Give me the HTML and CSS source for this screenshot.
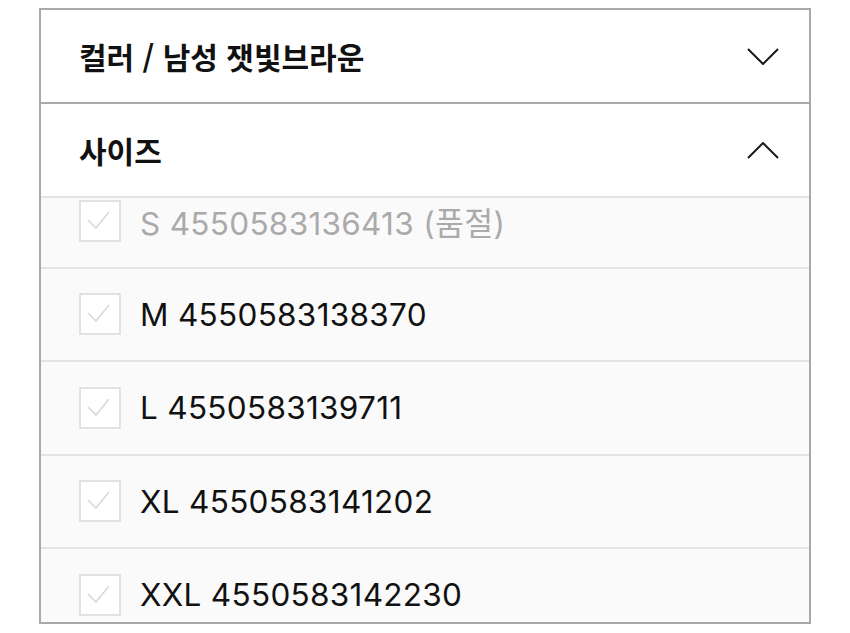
FILE: index.html
```html
<!DOCTYPE html>
<html lang="ko">
<head>
  <meta charset="UTF-8" />
  <meta name="viewport" content="width=device-width, initial-scale=1.0" />
  <title>옵션 선택</title>
  <link rel="stylesheet" href="styles.css">
</head>
<body>
  <div class="panel">
    <div class="acc-head">
      <span class="acc-title">컬러 / 남성 잿빛브라운</span>
      <svg class="chevron" width="32" height="17" viewBox="0 0 32 17">
        <polyline points="1,1 16,16 31,1" />
      </svg>
    </div>
    <div class="acc-head open">
      <span class="acc-title">사이즈</span>
      <svg class="chevron" width="32" height="17" viewBox="0 0 32 17">
        <polyline points="1,16 16,1 31,16" />
      </svg>
    </div>
    <div class="size-list">
      <ul class="sizes">
        <li class="size sold-out">
          <span class="check">
            <svg width="38" height="38" viewBox="0 0 38 38"><polyline points="7,18 15,26 28,10" /></svg>
          </span>
          <span class="size-label">S 4550583136413 (품절)</span>
        </li>
        <li class="size">
          <span class="check">
            <svg width="38" height="38" viewBox="0 0 38 38"><polyline points="7,18 15,26 28,10" /></svg>
          </span>
          <span class="size-label">M 4550583138370</span>
        </li>
        <li class="size">
          <span class="check">
            <svg width="38" height="38" viewBox="0 0 38 38"><polyline points="7,18 15,26 28,10" /></svg>
          </span>
          <span class="size-label">L 4550583139711</span>
        </li>
        <li class="size">
          <span class="check">
            <svg width="38" height="38" viewBox="0 0 38 38"><polyline points="7,18 15,26 28,10" /></svg>
          </span>
          <span class="size-label">XL 4550583141202</span>
        </li>
        <li class="size">
          <span class="check">
            <svg width="38" height="38" viewBox="0 0 38 38"><polyline points="7,18 15,26 28,10" /></svg>
          </span>
          <span class="size-label">XXL 4550583142230</span>
        </li>
      </ul>
    </div>
  </div>
</body>
</html>
```

FILE: styles.css
```css
body {
  margin: 0;
  background: #fff;
  font-family: Inter, "Noto Sans CJK KR", sans-serif;
  color: #111;
}
.panel {
  margin: 8px 0 0 39px;
  width: 768px;
  border: 2px solid #a9a9a9;
  background: #fff;
}
.acc-head {
  height: 92px;
  display: flex;
  align-items: center;
  justify-content: space-between;
  padding: 0 30px 0 38px;
  border-bottom: 2px solid #a9a9a9;
}
.acc-head.open {
  border-bottom-color: #e4e4e4;
}
.acc-title {
  font-family: "Noto Sans CJK KR", sans-serif;
  font-size: 30px;
  font-weight: 700;
  color: #111;
}
.chevron polyline {
  fill: none;
  stroke: #1a1a1a;
  stroke-width: 2;
}
.size-list {
  height: 424px;
  overflow: hidden;
  background: #fafafa;
}
.sizes {
  list-style: none;
  margin: -23px 0 0;
  padding: 0;
}
.size {
  height: 91.5px;
  display: flex;
  align-items: center;
  gap: 19px;
  padding-left: 38px;
  border-bottom: 2px solid #e4e4e4;
}
.check {
  width: 38px;
  height: 38px;
  border: 2px solid #e2e2e2;
  background: #fff;
  display: flex;
}
.check polyline {
  fill: none;
  stroke: #d9d9d9;
  stroke-width: 1.6;
}
.size-label {
  font-size: 31.5px;
  letter-spacing: 0.3px;
  color: #111;
}
.sold-out .size-label {
  color: #aaa;
}
```
